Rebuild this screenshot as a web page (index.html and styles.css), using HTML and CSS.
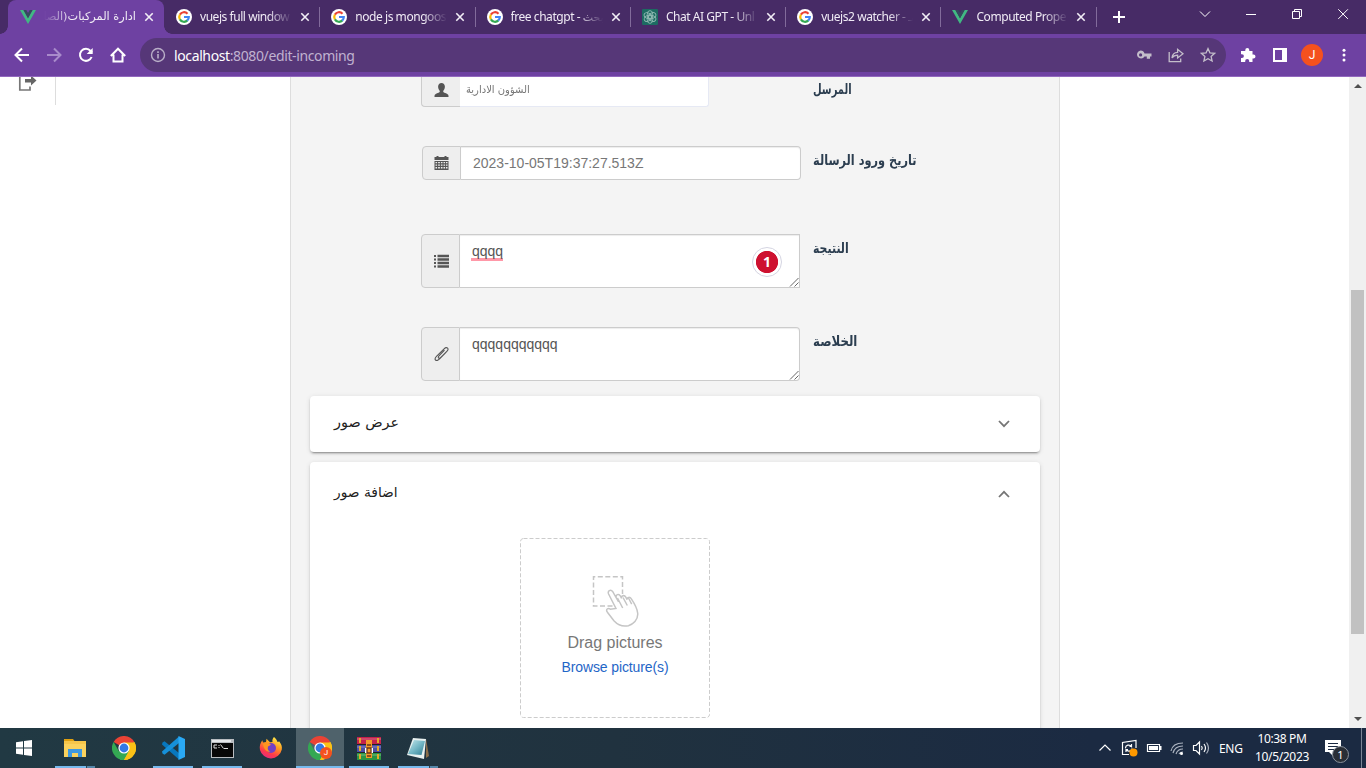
FILE: index.html
```
<!DOCTYPE html>
<html lang="en">
<head>
<meta charset="utf-8">
<title>ادارة المركبات</title>
<link rel="stylesheet" href="styles.css">
</head>
<body>
<svg width="0" height="0" class="defs">
  <symbol id="google" viewBox="0 0 16 16"><circle cx="8" cy="8" r="8" fill="#fff"/><g fill="none" stroke-width="2.2"><path d="M3.9 5.6A4.8 4.8 0 0 1 11.5 4.7" stroke="#ea4335"/><path d="M3.9 10.4A4.8 4.8 0 0 1 3.9 5.6" stroke="#fbbc05"/><path d="M11.4 11.4A4.8 4.8 0 0 1 3.9 10.4" stroke="#34a853"/><path d="M8 8h4.8a4.8 4.8 0 0 1-1.6 3.6" stroke="#4285f4"/></g></symbol>
  <symbol id="vue" viewBox="0 0 16 16"><path d="M0 1h3.4L8 9.2 12.6 1H16L8 15z" fill="#41b883"/><path d="M3.4 1h2.9L8 4l1.7-3h2.9L8 9.2z" fill="#35495e"/></symbol>
  <symbol id="close" viewBox="0 0 10 10"><path d="M1.3 1.3l7.4 7.4M8.7 1.3L1.3 8.7" stroke="#f2eef6" stroke-width="1.6"/></symbol>
  <symbol id="chrome" viewBox="0 0 24 24"><path d="M12 12L1.6 6A12 12 0 0 1 22.4 6z" fill="#ea4335"/><path d="M12 12L22.4 6A12 12 0 0 1 12 24z" fill="#fbc116"/><path d="M12 12l-4 12L12 24 17.2 15zM1.6 6A12 12 0 0 0 12 24l5.2-9H6.8z" fill="#34a853"/><path d="M12 6.5H22.6A12 12 0 0 1 12 24l5-9z" fill="#fbc116"/><circle cx="12" cy="12" r="5.6" fill="#fff"/><circle cx="12" cy="12" r="4.4" fill="#3478e5"/></symbol>
</svg>

<header class="tabs">
  <div class="tab active"><svg class="fav"><use href="#vue"/></svg><span class="label rtl" dir="rtl">ادارة المركبات(الصا</span><svg class="x"><use href="#close"/></svg></div>
  <div class="tab"><svg class="fav"><use href="#google"/></svg><span class="label">vuejs full window</span><svg class="x"><use href="#close"/></svg></div>
  <div class="tab"><svg class="fav"><use href="#google"/></svg><span class="label">node js mongoos</span><svg class="x"><use href="#close"/></svg></div>
  <div class="tab"><svg class="fav"><use href="#google"/></svg><span class="label">free chatgpt - <span class="ar">بحث</span></span><svg class="x"><use href="#close"/></svg></div>
  <div class="tab"><svg class="fav" viewBox="0 0 16 16"><rect width="16" height="16" rx="1" fill="#1d6b62"/><g fill="none" stroke="#8fb8b2" stroke-width=".9"><ellipse cx="8" cy="5.6" rx="2.8" ry="4"/><ellipse cx="8" cy="10.4" rx="2.8" ry="4"/><ellipse cx="8" cy="5.6" rx="2.8" ry="4" transform="rotate(60 8 8)"/><ellipse cx="8" cy="10.4" rx="2.8" ry="4" transform="rotate(60 8 8)"/><ellipse cx="8" cy="5.6" rx="2.8" ry="4" transform="rotate(120 8 8)"/><ellipse cx="8" cy="10.4" rx="2.8" ry="4" transform="rotate(120 8 8)"/></g></svg><span class="label">Chat AI GPT - Unl</span><svg class="x"><use href="#close"/></svg></div>
  <div class="tab"><svg class="fav"><use href="#google"/></svg><span class="label">vuejs2 watcher - <span class="ar">بـ</span></span><svg class="x"><use href="#close"/></svg></div>
  <div class="tab"><svg class="fav"><use href="#vue"/></svg><span class="label">Computed Prope</span><svg class="x"><use href="#close"/></svg></div>
  <svg class="plus" viewBox="0 0 12 12"><path d="M6 0v12M0 6h12" stroke="#fff" stroke-width="2"/></svg>
  <div class="winctl">
    <svg viewBox="0 0 46 28"><path d="M18 11.5l5 5 5-5" class="thin"/></svg>
    <svg viewBox="0 0 46 28"><path d="M18 14.5h10" class="thin"/></svg>
    <svg viewBox="0 0 46 28"><path d="M18.5 11.500h7v7h-7zM20.500 11v-1.500h7v7H26" class="thin"/></svg>
    <svg viewBox="0 0 46 28"><path d="M18.300 9.300l9.600 9.600M27.900 9.300l-9.600 9.600" class="thin"/></svg>
  </div>
</header>

<div class="toolbar">
  <div class="nav">
    <svg viewBox="0 0 16 16"><path d="M15 8H2M8 1.500L1.500 8 8 14.500"/></svg>
    <svg viewBox="0 0 16 16" class="dim"><path d="M1 8h13M8 1.500L14.500 8 8 14.500"/></svg>
    <svg viewBox="0 0 16 16"><path d="M13.600 10A6 6 0 1 1 12.600 4L14 5.500"/><path d="M14.700 1v6H8.700z" class="fill"/></svg>
    <svg viewBox="0 0 16 16"><path d="M.8 9L8 1.700 15.200 9M3.500 7.500V14.600H12.500V7.500"/></svg>
  </div>
  <div class="omni">
    <svg class="info" viewBox="0 0 16 16"><circle cx="8" cy="8" r="6.500" fill="none" stroke="#b9afc8" stroke-width="1.400"/><path d="M8 7v4.500M8 4.300v1.600" stroke="#b9afc8" stroke-width="1.600"/></svg>
    <span class="url"><b>localhost</b>:8080/edit-incoming</span>
    <div class="omni-icons">
      <svg viewBox="0 0 16 16"><path fill="#c3bdca" fill-rule="evenodd" d="M4.600 3.500a4 4 0 0 1 3.900 2.900H15.500V9.500H14v2.300h-3.200V9.500H8.500A4 4 0 1 1 4.600 3.500zm0 2.800a1.600 1.600 0 1 0 0 3.200 1.600 1.600 0 0 0 0-3.200z"/></svg>
      <svg viewBox="0 0 16 16"><path class="ol" d="M1.200 5V14.600H12.700V11.500M4 11c.3-3.600 2.200-5.600 5.600-5.700V2.300L15 6.800 9.600 11V8.200C7 8.200 5.300 9 4 11z"/></svg>
      <svg viewBox="0 0 16 16"><path class="ol" d="M8 1.600l1.900 4.200 4.700.5-3.500 3.100 1 4.600L8 11.700 3.900 14l1-4.600L1.400 6.300l4.700-.5z"/></svg>
    </div>
  </div>
  <div class="ext">
    <svg viewBox="0 0 16 16"><path fill="#fff" d="M2 4h3.300V3a2 2 0 0 1 4 0v1h3.200v3.400h1a2 2 0 0 1 0 4h-1V15H9.200v-1a2 2 0 0 0-4 0v1H1v-4h1a1.900 1.900 0 0 0 0-3.800H1V4z"/></svg>
    <svg viewBox="0 0 16 16"><path fill="#fff" fill-rule="evenodd" d="M1 1h14v14H1zM3 3v10h7V3z"/></svg>
    <span class="avatar">J</span>
    <svg viewBox="0 0 16 16"><g fill="#fff"><circle cx="8" cy="3.200" r="1.500"/><circle cx="8" cy="8" r="1.500"/><circle cx="8" cy="13" r="1.500"/></g></svg>
  </div>
</div>

<div class="view">
  <aside><svg viewBox="0 0 20 20"><path d="M8 1H2.800V16H13V12.500" fill="none" stroke="#777" stroke-width="1.700"/><path d="M8 5V8.500h6V11.500l5.500-5L14 1.500V5z" fill="#666"/></svg></aside>
  <main class="card">
    <div class="row r1"><div class="group"><span class="addon"><svg viewBox="0 0 14 14"><path d="M7 0c2 0 3.400 1.500 3.400 3.600 0 1.700-.7 3.400-1.700 4.300 0 1 .3 1.400 1.300 1.800 2 .8 4 1.500 4 3v1.300H0v-1.300c0-1.500 2-2.200 4-3 1-.4 1.300-.8 1.300-1.800C4.300 7 3.600 5.300 3.600 3.600 3.600 1.500 5 0 7 0z"/></svg></span><div class="control small"><span class="ar">الشؤون الادارية</span></div></div><label class="l1">المرسل</label></div>
    <div class="row r2"><div class="group"><span class="addon"><svg viewBox="0 0 14 14"><path fill-rule="evenodd" d="M0 1h2V0h2v1h6V0h2v1h2v3H0zM0 5h14v9H0zM1 6v1.300h1.600V6zM3.600 6v1.300h1.800V6zM6.400 6v1.300h1.600V6zM9 6v1.300h1.600V6zM11.500 6v1.300H13V6zM1 8.500v1.300h1.600V8.500zM3.600 8.500v1.300h1.800V8.500zM6.400 8.500v1.300h1.600V8.500zM9 8.500v1.300h1.600V8.500zM11.500 8.500v1.300H13V8.500zM1 11v1.500h1.600V11zM3.600 11v1.500h1.800V11zM6.400 11v1.500h1.600V11zM9 11v1.500h1.600V11zM11.500 11v1.500H13V11z"/></svg></span><div class="control date">2023-10-05T19:37:27.513Z</div></div><label class="l2">تاريخ ورود الرسالة</label></div>
    <div class="row r3"><div class="group"><span class="addon"><svg viewBox="0 0 15 14"><path d="M0 1h2v2H0zM0 4.500h2v2H0zM0 8h2v2H0zM0 11.500h2v2H0zM3.500 .8H15v2.400H3.500zM3.500 4.300H15v2.400H3.500zM3.500 7.800H15v2.400H3.500zM3.500 11.300H15v2.400H3.500z"/></svg></span><div class="control area square"><span class="misspelt">qqqq</span><span class="count">1</span><svg class="grip" viewBox="0 0 10 10"><path d="M1 9.500L9.500 1M5.500 9.500L9.500 5.500"/></svg></div></div><label class="l3">النتيجة</label></div>
    <div class="row r4"><div class="group"><span class="addon"><svg viewBox="0 0 15 14"><path d="M10.500 3.200L5.200 8.600c-.9 1-1.300 1.700-.7 2.300s1.500.2 2.300-.6l6-6c1.300-1.300 1.600-2.300.8-3.100s-2.300-.6-3.500.6L2.700 9.200C1.200 10.700.5 12 1.500 13s2.600.4 4.100-1.100l6.600-6.700" fill="none" stroke="#555" stroke-width="1.100"/></svg></span><div class="control area">qqqqqqqqqqq<svg class="grip" viewBox="0 0 10 10"><path d="M1 9.500L9.500 1M5.500 9.500L9.500 5.500"/></svg></div></div><label class="l4">الخلاصة</label></div>
    <section class="panel"><div class="head"><span class="a1">عرض صور</span><svg viewBox="0 0 12 8"><path d="M1 1l5 5.200L11 1"/></svg></div></section>
    <section class="panel open"><div class="head"><span class="a2">اضافة صور</span><svg viewBox="0 0 12 8"><path d="M1 7l5-5.200L11 7"/></svg></div>
      <div class="drop">
        <svg class="frame" viewBox="0 0 190 180"><rect x=".5" y=".5" width="189" height="179" rx="3"/></svg>
        <svg class="hand" viewBox="0 0 48 52"><path d="M20.500 30H1.500V.8H30.500V18" stroke-dasharray="5 2.500"/><path fill="#fff" d="M24 32.500L16.600 18c-1.300-2.800 2-5.200 4-2.500l6 10.500-2.300-4.500c-1.100-3 2.500-4.200 4-1.700l1.300 2.600c-.7-3 2.800-3.700 4.200-1.300l1.300 2.500c-.3-2.600 2.800-3 4.100-.9 3 4.500 6 9.500 6.500 14.500.6 7-4.800 11.200-9.300 12.500-6 1.400-11-1.200-14.500-5l-6.500-8.500c-2-3 .5-4.500 3-3z"/><path d="M25.500 22l5.200 10M31 21.500l4.300 8M36.500 22l3.200 6.200"/></svg>
        <div class="drag">Drag pictures</div><a>Browse picture(s)</a>
      </div>
    </section>
  </main>
  <div class="scroll"><i class="up"></i><div class="thumb"></div><i class="down"></i></div>
</div>

<footer class="task">
  <div class="slot start"><svg viewBox="0 0 16 16" width="16" height="16"><path fill="#fff" d="M0 2.200L7 1.200V7.500H0zM8 1L16 0V7.500H8zM0 8.500H7V14.800L0 13.800zM8 8.500H16V16L8 15z"/></svg></div>
  <div class="slot run more"><svg width="22" height="20" viewBox="0 0 22 20"><path fill="#e0a010" d="M0 1h9l1.500 2H0z"/><path fill="#fbd25d" d="M0 3h22v16H0z"/><path fill="#f7c64a" d="M0 3h22v3H0z"/><path fill="#3e98e0" d="M4 11h14v8h-4v-4H8v4H4z"/></svg></div>
  <div class="slot"><svg width="24" height="24"><use href="#chrome"/></svg></div>
  <div class="slot run"><svg width="24" height="24" viewBox="0 0 24 24"><path fill="#0877bd" d="M1.500 6.500L3.500 5.200 18 17v6.500L1 8.500z"/><path fill="#1690d9" d="M1 15.500l17-15V7L3.500 18.800l-2-1.300z"/><path fill="#2aa9f4" d="M17.500 0L24 3v18l-6.500 3z"/></svg></div>
  <div class="slot run"><svg width="23" height="19" viewBox="0 0 23 19"><path fill="#b8bcc0" d="M0 0h23v19H0z"/><path fill="#e4e7e9" d="M1 1h19v2H1z"/><path fill="#070707" d="M1 4h21v14H1z"/><path d="M6 6H3v3h3M8 6v1M8 8v1M9.500 5.500l3 4M13 9.500h4" stroke="#ddd" fill="none"/></svg></div>
  <div class="slot"><svg width="24" height="24" viewBox="0 0 24 24"><defs><linearGradient id="ff" x1=".8" y1="0" x2=".3" y2="1"><stop offset="0" stop-color="#fff44f"/><stop offset=".4" stop-color="#ff9a20"/><stop offset=".75" stop-color="#ff3a4a"/><stop offset="1" stop-color="#e52c80"/></linearGradient></defs><path fill="url(#ff)" d="M15 1c2 1.500 3 3.200 3.500 5l1.800-.5c2 2.600 3 5 2.500 8A11.200 11.200 0 0 1 1 14C.2 10 1.300 7 3.300 4.200L4 6.500 7 6 7.500 2.800 11 6.300 13.500 6C13 4 13.800 2.300 15 1z"/><circle cx="12" cy="12" r="5" fill="#7440c4"/><path fill="#ff9420" d="M4 8c3-2 6-1.500 8 .8l-3 1.700c-.8 3 .2 4.200 2.500 5.200-4 .8-7-3-7.500-7.700z"/></svg></div>
  <div class="slot run here"><svg width="24" height="24"><use href="#chrome"/></svg><span class="badge">J</span></div>
  <div class="slot run"><svg width="24" height="23" viewBox="0 0 24 23"><path fill="#c3214a" d="M0 0h24v7H0z"/><path fill="#4b4da5" d="M0 8h24v7H0z"/><path fill="#2b9443" d="M0 16h24v7H0z"/><path d="M0 2h24M0 10h24M0 18h24" stroke="#fff" stroke-opacity=".35"/><path d="M0 7.500h24M0 15.500h24" stroke="#222"/><path fill="#e6a929" d="M2 1h2v5H2zM2 9h2v5H2zM2 17h2v5H2zM20 1h2v5h-2zM20 9h2v5h-2zM20 17h2v5h-2z"/><path fill="#f29a27" d="M9 3h6v18H9z"/><path fill="#fff" d="M8 11h2v5H8zM14 11h2v5h-2z"/><path d="M10 8h4M10 11h4v5h-4zM10 19h4" fill="none" stroke="#69351c" stroke-width="1.300"/></svg></div>
  <div class="slot run more"><svg width="24" height="23" viewBox="0 0 24 23"><defs><linearGradient id="np" x1="0" y1="0" x2="1" y2="1"><stop offset="0" stop-color="#c7e8ec"/><stop offset=".5" stop-color="#75b8c6"/><stop offset="1" stop-color="#2d7d93"/></linearGradient></defs><path fill="#8a6d49" d="M20 2l3 17-3 2z"/><path fill="#e8f1f0" d="M7 1L20 2 18 22 1 18z"/><path fill="url(#np)" d="M8 3l11 1-3.500 14L2 17z"/></svg></div>
  <div class="tray">
    <svg width="14" height="16" viewBox="0 0 14 16"><path d="M1.500 10.500L7 5l5.500 5.500" class="tl"/></svg>
    <svg width="18" height="18" viewBox="0 0 18 18"><path class="tl" d="M9 15.500H2.500V3.500L16 1.500V9M5.500 9c0-3 4-4 6-1.500V5M12 7.500H9.500M12 9.500c-.5 3-4 3.500-6 1.200v2.300M5.500 10.700H8"/><circle cx="13.500" cy="13.500" r="4" fill="#f90"/></svg>
    <svg width="16" height="16" viewBox="0 0 16 16"><path class="tl" d="M1.500 4.500h12v7h-12z"/><path fill="#fff" d="M3 6h9v4H3zM14 6h1.500v4H14z"/></svg>
    <svg width="14" height="16" viewBox="0 0 14 16"><path class="tl faint" d="M1 11C2 6 6 3 13 3M3 13C4 9 7 6 13 6M6 14C7 11 9 9 13 9M9 14C9.500 13 11 12 13 12"/><circle cx="11.500" cy="13.500" r="1.500" fill="#fff"/></svg>
    <svg width="18" height="16" viewBox="0 0 18 16"><path class="tl" d="M1.500 5.500h2.500L7.500 2v12L4 10.500H1.500zM9.500 6q1.500 2 0 4M12 4q3 4 0 8"/><path class="tl faint" d="M14.500 2.500q4 5.500 0 11"/></svg>
    <span class="lang">ENG</span>
    <div class="clock"><span>10:38 PM</span><span>10/5/2023</span></div>
    <div class="note"><svg width="16" height="16" viewBox="0 0 16 16"><path fill="#fff" d="M0 0h16v12H8v4l-4-4H0z"/><path d="M3 3.500h10M3 6.500h10M3 9.500h7" stroke="#1b2a42"/></svg><span>1</span></div>
  </div>
</footer>
</body>
</html>
```
FILE: styles.css
```
* { box-sizing: border-box; }
body { margin: 0; width: 1366px; height: 768px; overflow: hidden; display: flex; flex-direction: column; background: #fff; font-family: "Liberation Sans", Arial, "DejaVu Sans", sans-serif; }
svg { display: block; flex: none; }
.defs { position: absolute; }

.tabs { height: 34px; flex: none; display: flex; background: #472b66; padding-left: 8px; color: #f0ebf5; font: 12px "Noto Sans", "DejaVu Sans", sans-serif; }
.tab { width: 155.3px; height: 34px; flex: none; display: flex; align-items: center; padding-left: 12px; position: relative; }
.tab::after { content: ""; position: absolute; right: -1px; top: 7px; width: 1px; height: 20px; background: #826b9b; }
.active { width: 156px; background: #6e41a2; border-radius: 8px 8px 0 0; }
.active::after { right: -8px; top: 26px; width: 8px; height: 8px; background: radial-gradient(circle at 100% 0, transparent 7.500px, #6e41a2 8px); }
.active::before { content: ""; position: absolute; left: -8px; top: 26px; width: 8px; height: 8px; background: radial-gradient(circle at 0 0, transparent 7.500px, #6e41a2 8px); }
.fav { width: 16px; height: 16px; }
.label { width: 94px; margin: 0 6px 0 8px; height: 20px; line-height: 20px; white-space: nowrap; letter-spacing: -.45px; -webkit-mask-image: linear-gradient(to right, #000 72%, transparent 98%); mask-image: linear-gradient(to right, #000 72%, transparent 98%); }
.label.rtl { width: 92px; margin: 0 8px; font-family: "DejaVu Sans", sans-serif; font-size: 11.300px; letter-spacing: 0; -webkit-mask-image: linear-gradient(to left, #000 72%, transparent); mask-image: linear-gradient(to left, #000 72%, transparent); }
.label .ar { font-size: 11px; letter-spacing: 0; }
.x { width: 10px; height: 10px; }
.plus { width: 12px; height: 12px; margin: 11px 0 0 17.200px; }
.winctl { display: flex; margin-left: auto; }
.winctl svg { width: 46px; height: 28px; }
.thin { fill: none; stroke: #fff; stroke-width: 1; }

.toolbar { height: 43px; flex: none; display: flex; align-items: center; background: #6e41a2; border-bottom: 1px solid #9268be; padding-left: 14px; }
.nav { display: flex; gap: 16px; width: 126px; flex: none; }
.nav svg { width: 16px; height: 16px; fill: none; stroke: #fff; stroke-width: 2; }
.nav .dim { stroke: #a98bcb; }
.nav .fill { fill: #fff; stroke: none; }
.omni { width: 1086px; flex: none; height: 34px; border-radius: 17px; background: #563778; display: flex; align-items: center; padding: 0 10px; }
.info { width: 16px; height: 16px; margin-right: 8px; }
.url { font: 14px "Noto Sans", sans-serif; color: #c0b2d0; letter-spacing: -.38px; white-space: nowrap; }
.url b { font-weight: 400; color: #fff; }
.omni-icons { margin-left: auto; display: flex; gap: 16px; }
.omni-icons svg { width: 16px; height: 16px; }
.ol { fill: none; stroke: #c3bdca; stroke-width: 1.300; }
.ext { display: flex; align-items: center; flex: none; margin-left: 14px; }
.ext svg { width: 16px; height: 16px; margin-right: 16px; }
.ext svg:last-child { margin-right: 0; }
.avatar { width: 22px; height: 22px; border-radius: 50%; background: #f4511e; color: #fff; font: 12px/22px Roboto, sans-serif; text-align: center; margin: 0 13px 0 -3px; }

.view { height: 651px; flex: none; display: flex; overflow: hidden; }
aside { width: 56px; height: 28px; border-right: 1px solid #ddd; padding-left: 17px; margin-right: 234px; }
aside svg { width: 20px; height: 20px; margin-top: -3px; }
.card { width: 770px; height: 651px; background: #f4f4f4; border: solid #ddd; border-width: 0 1px; padding: 0 19px; }
.row { display: flex; padding-left: 111px; }
.group { width: 379px; display: flex; margin-right: 13px; flex: none; }
.addon { width: 39px; background: #eee; border: 1px solid #ccc; border-radius: 4px 0 0 4px; display: flex; align-items: center; justify-content: center; flex: none; }
.addon svg { width: 15px; height: 14px; fill: #555; }
.r3 .addon, .r4 .addon { padding-left: 2px; }
.control { flex: 1; background: #fff; border: 1px solid #ccc; border-left: 0; border-radius: 0 4px 4px 0; font-size: 14px; color: #555; padding: 0 12px; box-shadow: inset 0 1px 1px rgba(0,0,0,.075); position: relative; }
.r1 { height: 30px; }
.r1 .addon { border-top: 0; border-right: 0; border-radius: 0 0 0 4px; }
.r1 .addon svg { margin-top: -4px; }
.small { flex: none; width: 249px; border: 1px solid #e6e9f4; border-top: 0; border-left: 0; padding: 0 6px; color: #777; font: 10.500px/24px "DejaVu Sans", sans-serif; box-shadow: none; border-radius: 0 0 3px 0; }
.small .ar { display: inline-block; transform: scaleX(.95); transform-origin: left; }
.r2 { height: 34px; margin-top: 39px; padding-left: 112px; }
.r2 .group { margin-right: 12px; }
.date { line-height: 32px; color: #777; }
.r3 { height: 54px; margin-top: 54px; }
.r4 { height: 54px; margin-top: 39px; }
.area { padding-top: 8px; line-height: 16px; }
.square { border-radius: 0; }
.misspelt { display: inline-block; height: 18px; margin-left: -1px; padding-left: 1px; border-bottom: 3px solid #ff98a8; }
.count { position: absolute; right: 17px; top: 12px; width: 30px; height: 30px; border-radius: 50%; border: 1px solid #d5d5e2; background: radial-gradient(circle, #ce1130 10.700px, #fff 11.500px); color: #fff; font: bold 14px/28px "Open Sans", sans-serif; text-align: center; }
.grip { position: absolute; right: 0; bottom: 0; width: 10px; height: 10px; fill: none; stroke: #555; stroke-width: .9; }
label { font: bold 14px/20px "DejaVu Sans", sans-serif; color: #2c3e50; white-space: nowrap; height: 20px; transform-origin: left; }
.row label { margin-top: 4px; }
.row .l1 { margin-top: 2px; transform: scaleX(.71); }
.l2 { transform: scaleX(.81); }
.l3 { transform: scaleX(.78); }
.l4 { transform: scaleX(.84); }

.panel { background: #fff; border-radius: 4px; height: 56px; margin-top: 15px; box-shadow: 0 3px 1px -2px rgba(0,0,0,.2), 0 2px 2px rgba(0,0,0,.14), 0 1px 5px rgba(0,0,0,.12); }
.open { height: 300px; margin-top: 10px; }
.head { height: 56px; display: flex; align-items: center; justify-content: space-between; padding: 0 30px 0 24px; font: 14.400px "DejaVu Sans", sans-serif; color: #222; }
.head span { margin-top: -4px; }
.a2 { font-size: 13.800px; }
.open .head { height: 64px; }
.head svg { width: 12px; height: 8px; fill: none; stroke: #757575; stroke-width: 1.800; }
.drop { width: 190px; height: 180px; margin: 12px 0 0 210px; padding-top: 38px; position: relative; text-align: center; color: #777; }
.frame { position: absolute; inset: 0; width: 190px; height: 180px; fill: none; stroke: #ccc; stroke-dasharray: 4 2; }
.hand { width: 48px; height: 52px; margin: 0 0 0 72px; fill: none; stroke: #c5c5c5; stroke-width: 1.500; }
.drag { font-size: 16px; line-height: 20px; margin-top: 5px; }
.drop a { display: block; font-size: 14px; line-height: 18px; margin-top: 5px; letter-spacing: -.12px; color: #1f66c7; }

.scroll { width: 17px; height: 651px; background: #f0f0f0; margin-left: 289px; display: flex; flex-direction: column; align-items: center; }
.scroll i { border: 4px solid transparent; }
.up { border-top-width: 0 !important; border-bottom-color: #505050 !important; margin-top: 7px; }
.down { border-bottom-width: 0 !important; border-top-color: #505050 !important; margin: auto 0 7px; }
.thumb { width: 13px; height: 344px; margin-top: 202px; background: #c1c1c1; }

.task { height: 40px; flex: none; display: flex; background: linear-gradient(90deg, #213943, #20323f 45%, #1b2a42 80%); color: #fff; }
.slot { width: 49px; height: 40px; display: flex; align-items: center; justify-content: center; position: relative; }
.slot svg { margin-right: 1px; }
.start { width: 48px; margin-right: 3px; }
.start svg, .here svg { margin-right: 0; }
.run::after { content: ""; position: absolute; left: 4px; right: 5px; bottom: 0; height: 2px; background: #76b9ed; }
.more::after { background: linear-gradient(90deg, #76b9ed 31px, #31434d 31px, #31434d 32px, #5486a9 32px); }
.here { background: #4f626b; width: 48px; margin: 0 1px 0 0; }
.here::after { left: 0; right: 0; }
.badge { position: absolute; left: 24px; top: 19px; width: 12px; height: 12px; border-radius: 50%; background: #f4511e; font: 8px/12px Roboto, sans-serif; text-align: center; }
.tray { display: flex; align-items: center; margin-left: auto; padding-right: 4px; border-right: 1px solid #7a8595; margin-right: 4px; font: 12px "Noto Sans", sans-serif; }
.tray > svg { margin-right: 8px; }
.tl { fill: none; stroke: #fff; stroke-width: 1.200; }
.faint { stroke: #aab2bf; }
.lang { width: 24px; margin-left: 1px; letter-spacing: -.3px; }
.clock { display: flex; flex-direction: column; align-items: center; width: 56px; margin-left: 11px; line-height: 18px; letter-spacing: -.35px; white-space: nowrap; }
.note { width: 32px; height: 40px; padding-top: 12px; margin-left: 15px; position: relative; }
.note span { position: absolute; left: 7px; top: 18px; width: 17px; height: 17px; border-radius: 50%; border: 1px solid #8b929c; background: #292e36; font-size: 11px; line-height: 15px; text-align: center; }
```
